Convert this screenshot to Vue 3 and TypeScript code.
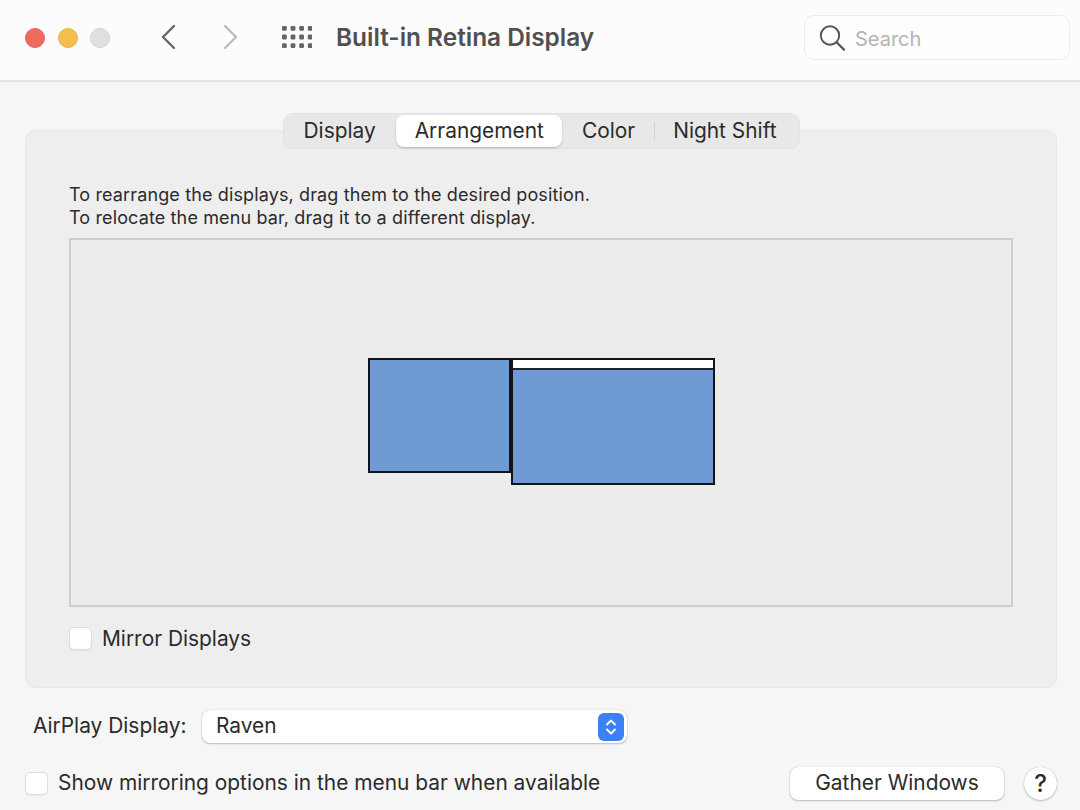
<script setup lang="ts">
const tabs = ['Display', 'Arrangement', 'Color', 'Night Shift']
const activeTab = 'Arrangement'
const gridDots = [0, 1, 2, 3].flatMap((x) => [0, 1, 2].map((y) => ({ x: 2 + x * 8.6, y: 2 + y * 8.6 })))
</script>

<template>
  <div class="window">
    <header class="titlebar">
      <div class="lights">
        <span class="light red" />
        <span class="light yellow" />
        <span class="light gray" />
      </div>
      <svg class="nav back" width="16" height="26" viewBox="0 0 16 26">
        <path d="M14 2 L3 13 L14 24" fill="none" stroke="#666" stroke-width="2.4" stroke-linecap="round" stroke-linejoin="round" />
      </svg>
      <svg class="nav forward" width="16" height="26" viewBox="0 0 16 26">
        <path d="M2 2 L13 13 L2 24" fill="none" stroke="#bcbcbc" stroke-width="2.4" stroke-linecap="round" stroke-linejoin="round" />
      </svg>
      <svg class="grid-icon" width="30" height="22" viewBox="0 0 30 22">
        <rect v-for="(d, i) in gridDots" :key="i" :x="d.x - 2" :y="d.y - 2" width="4.8" height="4.8" rx="1.2" fill="#666" />
      </svg>
      <h1 class="title">Built-in Retina Display</h1>
      <div class="search">
        <svg width="28" height="28" viewBox="0 0 28 28">
          <circle cx="12" cy="11.5" r="9.2" fill="none" stroke="#555" stroke-width="1.9" />
          <path d="M18.6 18.2 L26 25.6" fill="none" stroke="#555" stroke-width="2.2" stroke-linecap="round" />
        </svg>
        <span class="search-text">Search</span>
      </div>
    </header>

    <main class="content">
      <nav class="tabs">
        <template v-for="(tab, i) in tabs" :key="tab">
          <span v-if="i == 3" class="tab-sep" />
          <button class="tab" :class="{ active: tab == activeTab }">{{ tab }}</button>
        </template>
      </nav>

      <section class="panel">
        <p class="hint">
          To rearrange the displays, drag them to the desired position.<br />
          To relocate the menu bar, drag it to a different display.
        </p>
        <div class="canvas">
          <div class="screen left" />
          <div class="screen right"><div class="menubar" /></div>
        </div>
        <label class="check mirror">
          <span class="box" />
          <span>Mirror Displays</span>
        </label>
      </section>

      <div class="airplay">
        <span class="airplay-label">AirPlay Display:</span>
        <div class="select">
          <span>Raven</span>
          <span class="stepper">
            <svg width="14" height="22" viewBox="0 0 14 22">
              <path d="M3 8.5 L7 4.5 L11 8.5 M3 13.5 L7 17.5 L11 13.5" fill="none" stroke="#fff" stroke-width="1.9" stroke-linecap="round" stroke-linejoin="round" />
            </svg>
          </span>
        </div>
      </div>

      <div class="footer">
        <label class="check">
          <span class="box" />
          <span class="check-text">Show mirroring options in the menu bar when available</span>
        </label>
        <button class="gather">Gather Windows</button>
        <button class="help">?</button>
      </div>
    </main>
  </div>
</template>

<style>
html,
body {
  margin: 0;
  background: #f6f6f6;
}
</style>

<style scoped>
.window {
  width: 1080px;
  height: 810px;
  overflow: hidden;
  background: #f6f6f6;
  color: #2b2b2b;
  font-family: Inter, "Liberation Sans", sans-serif;
}

.titlebar {
  display: flex;
  align-items: center;
  height: 82px;
  padding: 0 10px 6px 25px;
  box-sizing: border-box;
  background: #fcfcfc;
  border-bottom: 2px solid #e2e2e2;
}

.lights {
  display: flex;
  gap: 12.5px;
  margin-top: 1px;
}

.light {
  width: 20px;
  height: 20px;
  box-sizing: border-box;
  border-radius: 50%;
}

.red {
  background: #ee6a5f;
  border: 1px solid #e5645a;
}

.yellow {
  background: #f5bf4f;
  border: 1px solid #e8b348;
}

.gray {
  background: #e0e0e0;
  border: 1px solid #d2d2d2;
}

.back {
  margin-left: 50px;
}

.forward {
  margin-left: 47px;
}

.grid-icon {
  margin-left: 43px;
}

.title {
  margin: 0 0 0 24px;
  font-size: 24.4px;
  font-weight: 600;
  color: #505050;
}

.search {
  display: flex;
  align-items: center;
  gap: 9px;
  margin: 1px 0 0 auto;
  width: 266px;
  height: 45px;
  box-sizing: border-box;
  padding-left: 13px;
  background: #fdfdfd;
  border: 1px solid #ececec;
  border-radius: 10px;
  font-size: 20px;
  color: #b4b4b4;
}

.search-text {
  margin-top: 2px;
}

.content {
  padding: 31px 23px 0 25px;
}

.tabs {
  position: relative;
  z-index: 1;
  display: flex;
  align-items: center;
  width: 517px;
  height: 36px;
  box-sizing: border-box;
  margin: 0 0 -19px 258px;
  padding: 0 1px;
  background: #e8e8e8;
  border: 1px solid #e2e2e2;
  border-radius: 10px;
}

.tab {
  height: 32px;
  padding: 0 18.5px 2px;
  border: none;
  border-radius: 8px;
  background: transparent;
  color: #2b2b2b;
  font: inherit;
  font-size: 20.9px;
  white-space: nowrap;
}

.tab:first-of-type {
  padding-right: 20.5px;
}

.tab.active {
  margin-right: 1px;
  background: #fff;
  box-shadow: 0 1px 2px rgba(0, 0, 0, 0.22);
}

.tab-sep {
  flex-shrink: 0;
  width: 1px;
  height: 18px;
  background: #d2d2d2;
}

.panel {
  height: 558px;
  box-sizing: border-box;
  padding: 52px 43px 0;
  background: #eeeeee;
  border: 1px solid #e8e8e8;
  border-radius: 10px;
}

.hint {
  margin: 0 0 9px;
  font-size: 18px;
  letter-spacing: 0.13px;
  line-height: 23px;
  color: #2b2b2b;
}

.canvas {
  position: relative;
  width: 944px;
  height: 369px;
  box-sizing: border-box;
  background: #ececec;
  border: 2px solid #cdcdcd;
}

.screen {
  position: absolute;
  box-sizing: border-box;
  background: #6f9bd2;
  border: 2px solid #141414;
}

.screen.left {
  left: 297px;
  top: 118px;
  width: 143px;
  height: 115px;
}

.screen.right {
  left: 440px;
  top: 118px;
  width: 204px;
  height: 127px;
}

.menubar {
  height: 10px;
  box-sizing: border-box;
  background: #fff;
  border-bottom: 2px solid #222;
}

.check {
  display: flex;
  align-items: center;
  gap: 10px;
  font-size: 20.9px;
}

.mirror {
  margin-top: 19px;
}

.box {
  width: 23px;
  height: 23px;
  box-sizing: border-box;
  background: #fff;
  border: 1px solid #dcdcdc;
  border-radius: 5px;
  box-shadow: 0 1px 1px rgba(0, 0, 0, 0.05);
}

.airplay {
  display: flex;
  align-items: center;
  margin: 22px 0 0 8px;
  font-size: 20.9px;
}

.airplay-label {
  width: 169px;
  padding-bottom: 3px;
}

.select {
  display: flex;
  align-items: center;
  justify-content: space-between;
  width: 425px;
  height: 33px;
  box-sizing: border-box;
  padding: 0 3px 2px 14px;
  background: #fff;
  border-radius: 8px;
  box-shadow: 0 0 1px rgba(0, 0, 0, 0.3), 0 1px 2px rgba(0, 0, 0, 0.22);
}

.stepper {
  display: flex;
  align-items: center;
  justify-content: center;
  width: 26px;
  height: 28px;
  margin-top: 2px;
  border-radius: 6px;
  background: #3b80f5;
}

.footer {
  display: flex;
  align-items: center;
  margin-top: 24px;
}

.check-text {
  margin-bottom: 2px;
}

.gather {
  width: 214px;
  height: 33px;
  margin-left: auto;
  padding: 0 0 2px;
  border: none;
  border-radius: 8px;
  background: #fff;
  color: #2b2b2b;
  font: inherit;
  font-size: 20.9px;
  box-shadow: 0 0 1px rgba(0, 0, 0, 0.3), 0 1px 2px rgba(0, 0, 0, 0.22);
}

.help {
  width: 33px;
  height: 33px;
  margin-left: 20px;
  padding: 0;
  border: none;
  border-radius: 50%;
  background: #fff;
  color: #2b2b2b;
  font: inherit;
  font-size: 24px;
  font-weight: 500;
  box-shadow: 0 0 1px rgba(0, 0, 0, 0.3), 0 1px 2px rgba(0, 0, 0, 0.22);
}
</style>
